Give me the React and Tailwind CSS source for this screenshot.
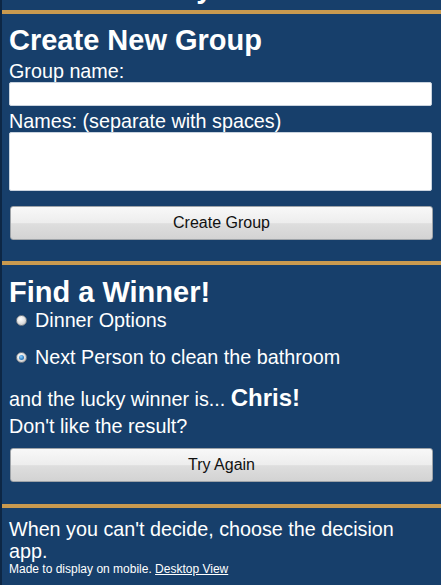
import React from "react";

function Radio({ checked }) {
  return (
    <span className="relative flex h-[11px] w-[11px] shrink-0 items-center justify-center rounded-full border border-[#7d848c] bg-[radial-gradient(circle_at_40%_35%,#ffffff_0%,#e6e6e6_45%,#b9b9b9_100%)]">
      {checked && (
        <span className="h-[5px] w-[5px] rounded-full bg-[radial-gradient(circle_at_40%_35%,#8fd0ff_0%,#2f7fc4_60%,#1d5a96_100%)]" />
      )}
    </span>
  );
}

function Button({ children, className = "" }) {
  return (
    <button
      type="button"
      className={
        "ml-[1px] flex h-[34px] w-[423px] items-center justify-center rounded-[3px] border border-[#9ea3a8] bg-[linear-gradient(to_bottom,#f8f8f8_0%,#ededed_50%,#dedede_52%,#d3d3d3_100%)] text-[16px] text-[#111111] " +
        className
      }
    >
      {children}
    </button>
  );
}

export default function App() {
  return (
    <div className="min-h-screen border-l-2 border-[#0d2745] bg-[#173f6b] font-['Liberation_Sans',Arial,sans-serif] text-white">
      <div className="h-[10px] overflow-hidden">
        <div className="mt-[-29px] pl-[24px] text-[29px] font-bold leading-[34px]">
          Decide Today
        </div>
      </div>

      <section className="border-t-4 border-[#c99a4f] pb-[21px] pl-[7px] pr-[9px] pt-[9px]">
        <h2 className="text-[29px] font-bold leading-[34px]">Create New Group</h2>
        <label className="mt-[3px] block text-[19.75px] leading-[22px]">Group name:</label>
        <input
          type="text"
          className="block h-[24px] w-full rounded-[2px] border border-[#c9d3de] bg-white px-1 text-black outline-none"
        />
        <label className="mt-[4px] block text-[19.75px] leading-[22px]">
          Names: (separate with spaces)
        </label>
        <textarea className="block h-[59px] w-full resize-none rounded-[2px] border border-[#c9d3de] bg-white px-1 text-black outline-none" />
        <Button className="mt-[15px]">Create Group</Button>
      </section>

      <section className="border-t-4 border-[#c99a4f] pb-[22px] pl-[7px] pr-[9px] pt-[10px]">
        <h2 className="text-[29px] font-bold leading-[34px]">Find a Winner!</h2>
        <div className="ml-[7px] flex h-[22px] items-center gap-[8px] text-[19.75px] leading-[22px]">
          <Radio />
          <span>Dinner Options</span>
        </div>
        <div className="ml-[7px] mt-[15px] flex h-[22px] items-center gap-[8px] text-[19.75px] leading-[22px]">
          <Radio checked />
          <span>Next Person to clean the bathroom</span>
        </div>
        <p className="mt-[17px] text-[19.75px] leading-[26px]">
          and the lucky winner is... <b className="text-[24px] font-bold">Chris!</b>
        </p>
        <p className="text-[19.75px] leading-[28px]">Don't like the result?</p>
        <Button className="mt-[8px]">Try Again</Button>
      </section>

      <footer className="border-t-4 border-[#c99a4f] pl-[7px] pr-[12px] pt-[10px]">
        <p className="text-[19.75px] leading-[22px]">
          When you can't decide, choose the decision app.
        </p>
        <p className="text-[12px] leading-[14px]">
          Made to display on mobile. <a href="#" className="underline">Desktop View</a>
        </p>
      </footer>
    </div>
  );
}
